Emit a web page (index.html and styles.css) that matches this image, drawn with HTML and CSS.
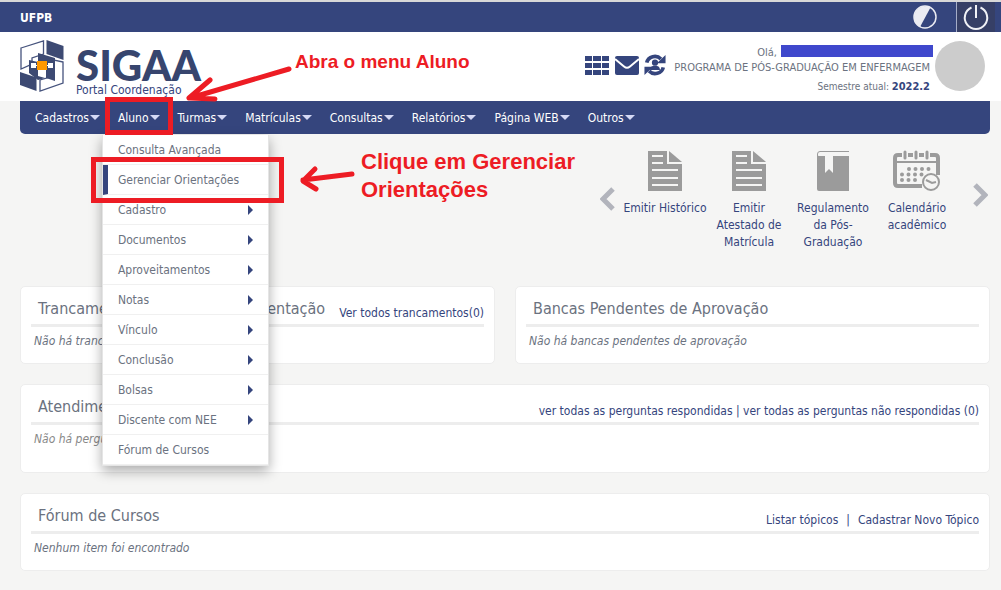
FILE: index.html
```html
<!DOCTYPE html>
<html lang="pt-BR">
<head>
<meta charset="utf-8">
<title>SIGAA - Portal Coordenação</title>
<link rel="stylesheet" href="styles.css">
</head>
<body>
<div class="topbar">
  <a class="org" href="#">UFPB</a>
  <div class="top-actions">
    <button class="contrast" aria-label="Contraste"><svg width="26" height="26" viewBox="0 0 26 26"><circle cx="13" cy="13" r="11" fill="none" stroke="#eaebf2" stroke-width="1.5"/><path d="M18.500 3.500A11 11 0 1 0 8 23Z" fill="#eaebf2"/></svg></button>
    <button class="power" aria-label="Sair"><svg width="30" height="30" viewBox="0 0 30 30" fill="none" stroke="#f0f1f6" stroke-width="2"><path d="M10.500 5.500A11.200 11.200 0 1 0 19.500 5.500"/><path d="M15 3V16"/></svg></button>
  </div>
</div>
<header class="header">
  <a class="brand" href="#">
    <svg class="logo" width="44" height="52" viewBox="0 0 44 52" aria-hidden="true">
      <g fill="none" stroke="#46537d" stroke-width="1.300"><path d="M1 8L23.500 1V14L12 18V24L1 29Z"/><path d="M43 22L34 20V36L20 40V51L43 43Z"/></g>
      <g fill="#3d4a73"><path d="M26.500 0L43.500 6V20L26.500 14Z"/><path d="M0 32L16.500 37.500V51L0 45Z"/><path d="M18 13L35 18V41L26 38V30H18Z"/><path d="M9 20L18 22V36L25 38L18 40L9 33Z"/></g>
      <path d="M11 23H16V28H11ZM28 23H33V28H28Z" fill="#fff"/>
      <path d="M15 25.500H29" stroke="#fff"/>
      <path d="M17 21H27V30H17Z" fill="#ff9800"/>
    </svg>
    <span class="brand-text"><span class="brand-name">SIGAA</span><span class="brand-sub">Portal Coordenação</span></span>
  </a>
  <div class="user-area">
    <div class="quick">
      <button aria-label="Módulos"><svg width="26" height="22" viewBox="0 0 26 22" fill="#35457d"><path d="M1 2H8V7H1ZM9 2H17V7H9ZM18 2H25V7H18ZM1 9H8V14H1ZM9 9H17V14H9ZM18 9H25V14H18ZM1 16H8V21H1ZM9 16H17V21H9ZM18 16H25V21H18Z"/></svg></button>
      <button aria-label="Mensagens"><svg width="26" height="22" viewBox="0 0 26 22"><path d="M3 2H23Q25 2 25 4V19Q25 21 23 21H3Q1 21 1 19V4Q1 2 3 2Z" fill="#35457d"/><path d="M1 5L10 12.500Q13 15 16 12.500L25 5" fill="none" stroke="#fff" stroke-width="2"/></svg></button>
      <button aria-label="Alterar vínculo"><svg width="22" height="22" viewBox="0 0 24 24" fill="none" stroke="#35457d" stroke-width="4"><path d="M3 9.500A9 8.500 0 0 1 18.500 5.500M21 14.500A9 8.500 0 0 1 5.500 18.500"/><path d="M23.500 1V10H14ZM0.500 23V14H10Z" fill="#35457d" stroke="none"/><path d="M6.500 17.500Q7 13 10 13H14Q17 13 17.500 17.500Z" fill="#35457d" stroke="none"/><circle cx="12" cy="9.500" r="3.400" fill="#35457d" stroke="none"/></svg></button>
    </div>
    <div class="user-info">
      <div class="hello">Olá, <span class="redacted"></span></div>
      <div class="program">PROGRAMA DE PÓS-GRADUAÇÃO EM ENFERMAGEM</div>
      <div class="term">Semestre atual: <strong>2022.2</strong></div>
    </div>
    <div class="avatar"></div>
  </div>
</header>
<div class="page">
  <nav class="menubar">
    <button class="menu-btn">Cadastros</button>
    <div class="menu-open">
      <button class="menu-btn">Aluno</button>
      <div class="dropdown">
        <a href="#">Consulta Avançada</a>
        <a href="#" class="current">Gerenciar Orientações</a>
        <a href="#" class="sub">Cadastro</a>
        <a href="#" class="sub">Documentos</a>
        <a href="#" class="sub">Aproveitamentos</a>
        <a href="#" class="sub">Notas</a>
        <a href="#" class="sub">Vínculo</a>
        <a href="#" class="sub">Conclusão</a>
        <a href="#" class="sub">Bolsas</a>
        <a href="#" class="sub">Discente com NEE</a>
        <a href="#">Fórum de Cursos</a>
      </div>
    </div>
    <button class="menu-btn">Turmas</button>
    <button class="menu-btn">Matrículas</button>
    <button class="menu-btn">Consultas</button>
    <button class="menu-btn">Relatórios</button>
    <button class="menu-btn">Página WEB</button>
    <button class="menu-btn">Outros</button>
  </nav>
  <div class="shortcuts">
    <button class="arrow" aria-label="Anterior"><svg width="16" height="24" viewBox="0 0 16 24"><path d="M13 2L3 12L13 22" fill="none" stroke="#b2b4bc" stroke-width="5"/></svg></button>
    <a class="shortcut" href="#"><svg width="34" height="42" viewBox="0 0 34 42"><path d="M0 1H19V14H34V41H0Z" fill="#9b9b9b"/><path d="M21 1L34 12H21Z" fill="#9b9b9b"/><path d="M4 6H15M4 13H15M4 20H30M4 28H30M4 35H30" stroke="#f5f5f4" stroke-width="2"/></svg><span class="one-line">Emitir Histórico</span></a>
    <a class="shortcut" href="#"><svg width="34" height="42" viewBox="0 0 34 42"><path d="M0 1H19V14H34V41H0Z" fill="#9b9b9b"/><path d="M21 1L34 12H21Z" fill="#9b9b9b"/><path d="M4 6H15M4 13H15M4 20H30M4 28H30M4 35H30" stroke="#f5f5f4" stroke-width="2"/></svg><span>Emitir Atestado de Matrícula</span></a>
    <a class="shortcut" href="#"><svg width="34" height="42" viewBox="0 0 34 42"><path d="M1 4Q1 6 3 6H33V41H3Q1 41 1 39Z" fill="#9b9b9b"/><path d="M33 1.500H4Q1.500 1.500 1.500 4V8" fill="none" stroke="#9b9b9b"/><path d="M9 3H17V23L13 19L9 23Z" fill="#f5f5f4"/></svg><span>Regulamento da Pós-Graduação</span></a>
    <a class="shortcut" href="#"><svg width="48" height="42" viewBox="0 0 48 42"><path d="M29 36H5Q2 36 2 33V8Q2 5 5 5H42Q45 5 45 8V25" fill="none" stroke="#9b9b9b" stroke-width="4"/><path d="M2 12H45" stroke="#9b9b9b" stroke-width="2"/><path d="M12 2V8M23 2V8M34 2V8" stroke="#f5f5f4" stroke-width="6" stroke-linecap="round"/><path d="M12 2V8M23 2V8M34 2V8" stroke="#9b9b9b" stroke-width="3" stroke-linecap="round"/><path d="M16 19H39M9 24.500H32M9 30H27" stroke="#9b9b9b" stroke-width="4" stroke-linecap="round" stroke-dasharray="0 6.500"/><circle cx="38" cy="32" r="8" fill="#f5f5f4" stroke="#9b9b9b" stroke-width="2"/><path d="M33 30L39 33L43 32" fill="none" stroke="#9b9b9b" stroke-width="2"/></svg><span>Calendário acadêmico</span></a>
    <button class="arrow next" aria-label="Próximo"><svg width="16" height="24" viewBox="0 0 16 24"><path d="M3 2L13 12L3 22" fill="none" stroke="#b2b4bc" stroke-width="5"/></svg></button>
  </div>
  <main class="cards">
    <section class="card half">
      <div class="card-head"><h2>Trancamentos Pendentes de Orientação</h2><div class="links"><a href="#">Ver todos trancamentos(0)</a></div></div>
      <p>Não há trancamentos</p>
    </section>
    <section class="card half">
      <div class="card-head"><h2>Bancas Pendentes de Aprovação</h2></div>
      <p>Não há bancas pendentes de aprovação</p>
    </section>
    <section class="card tall">
      <div class="card-head"><h2>Atendimento</h2><div class="links"><a href="#">ver todas as perguntas respondidas</a> | <a href="#">ver todas as perguntas não respondidas (0)</a></div></div>
      <p class="muted">Não há perguntas</p>
    </section>
    <section class="card">
      <div class="card-head"><h2>Fórum de Cursos</h2><div class="links wide"><a href="#">Listar tópicos</a><span>|</span><a href="#">Cadastrar Novo Tópico</a></div></div>
      <p>Nenhum item foi encontrado</p>
    </section>
  </main>
</div>
<svg class="marks" width="600" height="220" viewBox="0 0 600 220" fill="none" stroke="#ed1c24" stroke-width="5" aria-hidden="true">
  <rect x="107.500" y="99.500" width="63" height="33"/>
  <rect x="93.500" y="159.500" width="188" height="41"/>
  <g stroke-linecap="round" stroke-linejoin="round"><path d="M289 69L190 98M210 80L189 98L215 99"/><path d="M352 174L303 180M315 169L303 181L316 189"/></g>
</svg>
<div class="note note-menu">Abra o menu Aluno</div>
<div class="note note-item">Clique em Gerenciar<br>Orientações</div>
</body>
</html>
```
FILE: styles.css
```css
* { box-sizing: border-box; }
body {
  margin: 0;
  position: relative;
  background: #f5f5f4;
  color: #6b7280;
  font: 12px/18px "DejaVu Sans Condensed", Tahoma, "DejaVu Sans", sans-serif;
}
a { color: #35457d; text-decoration: none; }
button { border: 0; padding: 0; background: none; color: inherit; font: inherit; display: flex; align-items: center; justify-content: center; }
svg { display: block; }
.topbar {
  display: flex;
  justify-content: space-between;
  height: 32px;
  padding: 0 6px 0 20px;
  background: #35457d;
  border-top: 2px solid #d8d8d8;
}
.org { color: #fff; font-weight: bold; line-height: 32px; }
.top-actions { display: flex; gap: 18px; }
.power { width: 39px; border-left: 1px solid #a5adc8; background: #363f66; }
.header {
  display: flex;
  justify-content: space-between;
  height: 69px;
  padding: 8px 16px 0 20px;
  background: #fff;
}
.brand { display: flex; gap: 12px; }
.brand-text { display: flex; flex-direction: column; }
.brand-name { font: 900 42px/36px Lato, sans-serif; color: #37456e; padding-top: 7px; }
.brand-sub { line-height: 14px; }
.user-area { display: flex; }
.quick { display: flex; gap: 4px; align-items: center; height: 50px; margin-right: 8px; }
.user-info { text-align: right; font-size: 11px; line-height: 15px; padding-top: 5px; }
.hello { display: flex; justify-content: flex-end; gap: 4px; margin-right: -3px; }
.redacted { width: 152px; height: 12px; background: #3f48cc; }
.term { font-size: 10px; margin-top: 4px; }
.term strong { color: #35457d; font-size: 11px; }
.avatar { width: 50px; height: 50px; margin-left: 5px; border-radius: 50%; background: #ccc; margin-top: 1px; }
.page { padding: 0 11px 0 20px; }
.menubar {
  display: flex;
  gap: 18px;
  height: 33px;
  padding: 0 15px;
  background: #35457d;
  color: #fff;
  border-radius: 0 0 5px 5px;
}
.menu-btn { height: 33px; gap: 1px; }
.menu-btn::after { content: ""; border: 5px solid transparent; border-top-color: #d5d9f5; border-bottom: 0; }
.menu-open { position: relative; }
.dropdown {
  position: absolute;
  top: 34px;
  left: -16px;
  width: 167px;
  z-index: 2;
  background: #fff;
  border: 1px solid #e5e5e5;
  border-width: 0 1px 1px;
  box-shadow: 0 5px 12px #0005;
}
.dropdown a {
  display: flex;
  align-items: center;
  justify-content: space-between;
  height: 30px;
  padding: 0 15px;
  color: #6b7280;
  border-bottom: 1px solid #f0f0f0;
}
.dropdown .current { border-left: 5px solid #35457d; padding-left: 10px; }
.sub::after { content: ""; border: 5px solid transparent; border-left-color: #35457d; border-right: 0; }
.shortcuts { display: flex; justify-content: flex-end; gap: 4px; height: 152px; padding: 16px 2px 0 0; }
.shortcut { display: flex; flex-direction: column; align-items: center; gap: 8px; width: 80px; line-height: 17px; text-align: center; }
.one-line { white-space: nowrap; }
.arrow { height: 24px; margin-top: 37px; margin-right: 5px; }
.arrow.next { margin: 33px 0 0 11px; }
.cards { display: grid; grid-template-columns: 1fr 1fr; gap: 20px; }
.card { grid-column: 1 / -1; min-height: 78px; padding: 10px; background: #fff; border: 1px solid #ededed; border-radius: 5px; }
.card.half { grid-column: auto; }
.card.tall { min-height: 89px; }
.card-head { display: flex; justify-content: space-between; align-items: flex-end; height: 30px; border-bottom: 3px solid #ededed; padding-left: 7px; white-space: nowrap; }
.card h2 { margin: 0; font-size: 16px; font-weight: normal; line-height: 30px; }
.links { color: #35457d; line-height: 22px; }
.wide { display: flex; gap: 8px; }
.card p { margin: 5px 3px 0; font-style: italic; }
.card .muted { color: #888; }
.marks { position: absolute; left: 0; top: 0; z-index: 3; pointer-events: none; }
.note { position: absolute; z-index: 3; color: #ed1c24; font: bold 19px/28px "Liberation Sans", Arial, sans-serif; }
.note-menu { left: 295px; top: 48px; }
.note-item { left: 361px; top: 148px; font-size: 22px; }
```
